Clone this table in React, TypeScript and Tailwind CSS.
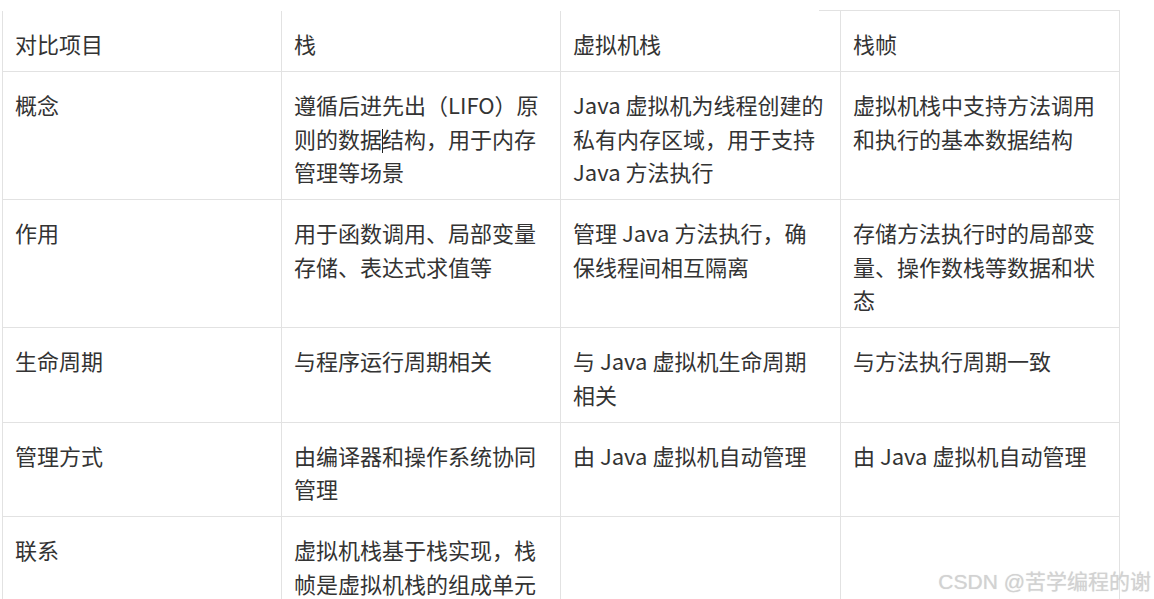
const rows: string[][][] = [
  [["对比项目"], ["栈"], ["虚拟机栈"], ["栈帧"]],
  [
    ["概念"],
    ["遵循后进先出（LIFO）原", "则的数据|结构，用于内存", "管理等场景"],
    ["Java 虚拟机为线程创建的", "私有内存区域，用于支持", "Java 方法执行"],
    ["虚拟机栈中支持方法调用", "和执行的基本数据结构"],
  ],
  [
    ["作用"],
    ["用于函数调用、局部变量", "存储、表达式求值等"],
    ["管理 Java 方法执行，确", "保线程间相互隔离"],
    ["存储方法执行时的局部变", "量、操作数栈等数据和状", "态"],
  ],
  [
    ["生命周期"],
    ["与程序运行周期相关"],
    ["与 Java 虚拟机生命周期", "相关"],
    ["与方法执行周期一致"],
  ],
  [
    ["管理方式"],
    ["由编译器和操作系统协同", "管理"],
    ["由 Java 虚拟机自动管理"],
    ["由 Java 虚拟机自动管理"],
  ],
  [["联系"], ["虚拟机栈基于栈实现，栈", "帧是虚拟机栈的组成单元"], [], []],
];

// a line may hold a "|" where the text caret sits
function Line({ text }: { text: string }) {
  const parts = text.split("|");
  if (parts.length === 1) return <>{text}</>;
  return (
    <>
      {parts[0]}
      <span className="inline-block w-px -mr-px h-[24px] bg-[#222] align-[-5px]" />
      {parts[1]}
    </>
  );
}

export default function App() {
  return (
    <div className="relative h-[599px] w-[1154px] overflow-hidden bg-white font-['Noto_Sans_CJK_SC','Noto_Sans',sans-serif] text-[#333]">
      <div className="flex h-[11px]">
        <div className="w-[819px]" />
        <div className="w-[301px] border-b border-[#e2e2e2]" />
      </div>

      <div className="ml-[2px] grid grid-cols-[280px_279px_280px_279px] text-[22px] leading-[33.5px]">
        {rows.map((row, r) =>
          row.map((cell, c) => (
            <div
              key={`${r}-${c}`}
              className={`border-b border-r border-[#e2e2e2] pl-[12px] pr-[8px] pt-[16px] pb-[10.5px] whitespace-nowrap ${
                c === 0 ? "border-l" : ""
              } ${r === rows.length - 1 ? "min-h-[128px]" : ""}`}
            >
              {cell.map((line, i) => (
                <div key={i}>
                  <Line text={line} />
                </div>
              ))}
            </div>
          ))
        )}
      </div>

      {/* watermark */}
      <div className="absolute right-[3px] bottom-[7px] font-['Liberation_Sans','Noto_Sans_CJK_SC',sans-serif] text-[21px] leading-none text-[#d2d2d2] [text-shadow:0_0_1px_rgba(140,140,140,0.3)]">
        CSDN @苦学编程的谢
      </div>
    </div>
  );
}
